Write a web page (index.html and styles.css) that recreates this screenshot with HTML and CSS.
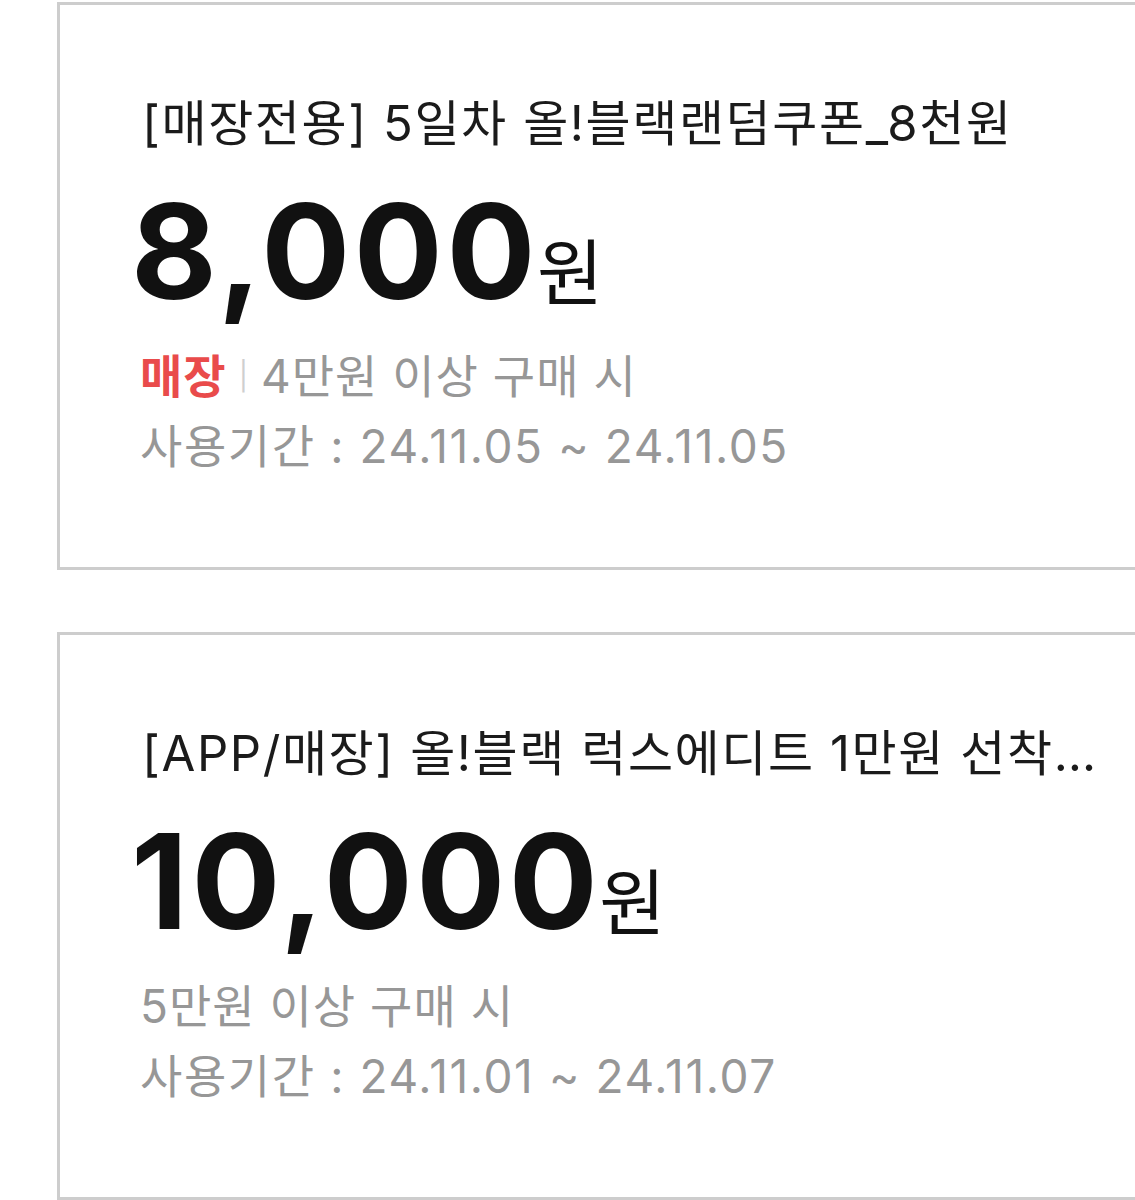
FILE: index.html
```html
<!DOCTYPE html>
<html lang="ko">
<head>
<meta charset="utf-8">
<link rel="stylesheet" href="styles.css">
</head>
<body>
<div class="list">
  <div class="coupon">
    <div class="title">[매장전용] 5일차 올!블랙랜덤쿠폰_8천원</div>
    <div class="price"><span class="amount">8,000</span><span class="unit">원</span></div>
    <div class="cond"><span class="tag">매장</span><span class="sep">|</span>4만원 이상 구매 시</div>
    <div class="period">사용기간 : 24.11.05 ~ 24.11.05</div>
  </div>
  <div class="coupon">
    <div class="title">[APP/매장] 올!블랙 럭스에디트 1만원 선착순 쿠폰</div>
    <div class="price"><span class="amount">10,000</span><span class="unit">원</span></div>
    <div class="cond">5만원 이상 구매 시</div>
    <div class="period">사용기간 : 24.11.01 ~ 24.11.07</div>
  </div>
</div>
</body>
</html>
```
FILE: styles.css
```css
html, body {
  margin: 0;
  padding: 0;
  overflow: hidden;
  background: #ffffff;
}
body {
  font-family: Inter, "Noto Sans CJK KR", sans-serif;
  color: #111111;
}
.list {
  display: flex;
  flex-direction: column;
  gap: 62px;
  padding-top: 2px;
  padding-left: 57px;
}
.coupon {
  box-sizing: border-box;
  width: 1110px;
  height: 568px;
  border: 3px solid #cdcdcd;
  padding: 89px 66px 0 83px;
  display: flex;
  flex-direction: column;
}
.title {
  font-size: 49px;
  line-height: 60px;
  letter-spacing: 1.6px;
  white-space: nowrap;
  overflow: hidden;
  text-overflow: ellipsis;
  color: #1b1b1b;
  margin-left: -1px;
}
.price {
  display: flex;
  align-items: baseline;
  height: 140px;
  margin-top: 27px;
}
.amount {
  font-size: 132px;
  font-weight: 700;
  line-height: 140px;
  letter-spacing: 3.5px;
  color: #111111;
  margin-left: -12px;
}
.unit {
  font-size: 72px;
  line-height: 140px;
  margin-left: -2px;
  color: #111111;
}
.cond {
  font-size: 46px;
  line-height: 70px;
  letter-spacing: 1px;
  color: #979797;
  display: flex;
  align-items: center;
  margin-top: 20px;
  margin-left: -3px;
}
.tag {
  color: #e94b4b;
  font-weight: 700;
}
.sep {
  color: #cfcfcf;
  font-size: 28px;
  margin: 0 12px 0 12px;
}
.period {
  font-size: 46px;
  line-height: 70px;
  letter-spacing: 1.6px;
  color: #979797;
  margin-left: -3px;
}
```
